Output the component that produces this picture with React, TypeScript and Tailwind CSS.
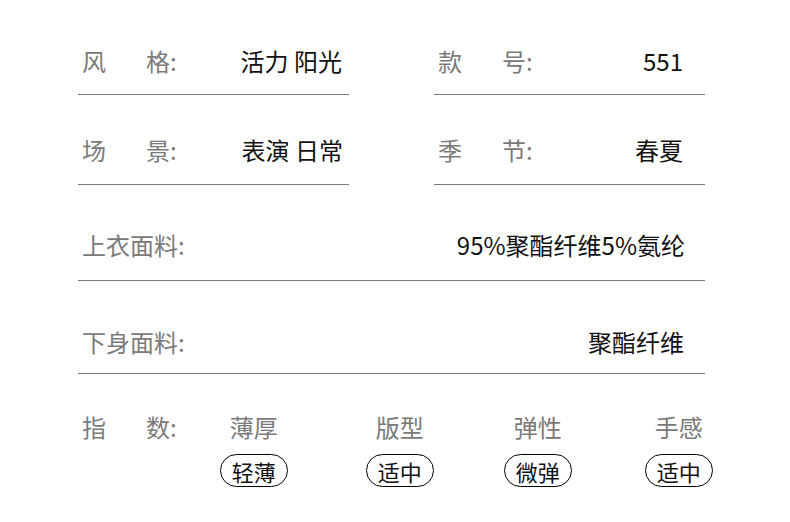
const font = { fontFamily: '"Noto Sans CJK SC", "Noto Sans", sans-serif' };

const Label = ({ a, b }: { a: string; b: string }) => (
    <div className="flex shrink-0 text-[24px] leading-[30px] text-[#7a7a7a] pl-[4px]">
        <span>{a}</span>
        <span className="ml-[40px]">{b}:</span>
    </div>
);

const App = () => {
    const indexCols = [
        { title: '薄厚', tag: '轻薄', cls: 'ml-[31px]' },
        { title: '版型', tag: '适中', cls: 'ml-[54px]' },
        { title: '弹性', tag: '微弹', cls: 'ml-[46px]' },
        { title: '手感', tag: '适中', cls: 'ml-[49px]' },
    ];

    return (
        <div className="w-[790px] h-[522px] bg-white overflow-hidden" style={font}>
            <div className="ml-[78px] w-[627px] pt-[46px]">
                <div className="flex justify-between">
                    <div className="w-[271px] flex items-center justify-between border-b border-[#7a7a7a] pb-[18px] pr-[7px]">
                        <Label a="风" b="格" />
                        <span className="text-[24px] leading-[30px] text-[#111]">活力 阳光</span>
                    </div>
                    <div className="w-[271px] flex items-center justify-between border-b border-[#7a7a7a] pb-[18px] pr-[22px]">
                        <Label a="款" b="号" />
                        <span className="text-[24px] leading-[30px] text-[#111]">551</span>
                    </div>
                </div>
                <div className="flex justify-between pt-[40px]">
                    <div className="w-[271px] flex items-center justify-between border-b border-[#7a7a7a] pb-[19px] pr-[6px]">
                        <Label a="场" b="景" />
                        <span className="text-[24px] leading-[30px] text-[#111]">表演 日常</span>
                    </div>
                    <div className="w-[271px] flex items-center justify-between border-b border-[#7a7a7a] pb-[19px] pr-[22px]">
                        <Label a="季" b="节" />
                        <span className="text-[24px] leading-[30px] text-[#111]">春夏</span>
                    </div>
                </div>
                <div className="flex items-center justify-between border-b border-[#7a7a7a] pt-[45px] pb-[20px] pr-[20px]">
                    <span className="text-[24px] leading-[30px] text-[#7a7a7a] pl-[4px]">上衣面料:</span>
                    <span className="text-[24px] leading-[30px] text-[#111]">95%聚酯纤维5%氨纶</span>
                </div>
                <div className="flex items-center justify-between border-b border-[#7a7a7a] pt-[46px] pb-[16px] pr-[21px]">
                    <span className="text-[24px] leading-[30px] text-[#7a7a7a] pl-[4px]">下身面料:</span>
                    <span className="text-[24px] leading-[30px] text-[#111]">聚酯纤维</span>
                </div>
                <div className="flex pt-[38px]">
                    <Label a="指" b="数" />
                    {indexCols.map((c, i) => (
                        <div key={i} className={`w-[92px] shrink-0 flex flex-col items-center ${c.cls}`}>
                            <span className="text-[24px] leading-[30px] text-[#7a7a7a]">{c.title}</span>
                            <span className="mt-[12px] w-[68px] h-[33px] rounded-full border-[1.5px] border-black flex items-center justify-center text-[22px] leading-none text-[#111]">
                                {c.tag}
                            </span>
                        </div>
                    ))}
                </div>
            </div>
        </div>
    );
};

export default App;
